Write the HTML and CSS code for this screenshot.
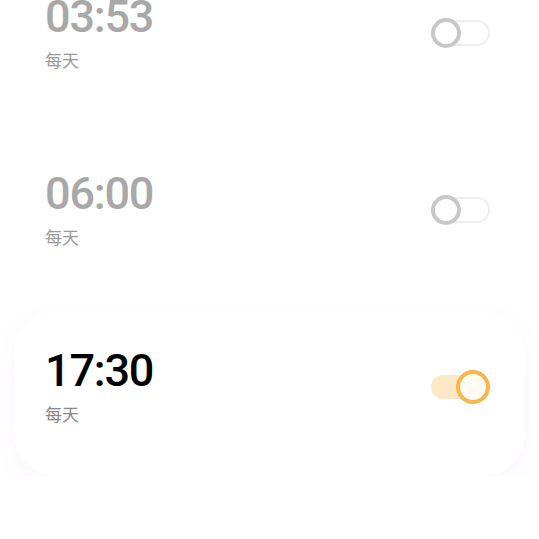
FILE: index.html
```html
<!DOCTYPE html>
<html lang="zh">
<head>
    <meta charset="UTF-8">
    <meta name="viewport" content="width=device-width, initial-scale=1.0">
    <title>闹钟</title>
    <link rel="stylesheet" href="styles.css">
</head>
<body>
    <div class="alarm-list">
        <div class="alarm">
            <div class="alarm-info">
                <div class="alarm-time">03:53</div>
                <div class="alarm-repeat">每天</div>
            </div>
            <div class="switch"><span class="knob"></span></div>
        </div>
        <div class="alarm">
            <div class="alarm-info">
                <div class="alarm-time">06:00</div>
                <div class="alarm-repeat">每天</div>
            </div>
            <div class="switch"><span class="knob"></span></div>
        </div>
        <div class="alarm active">
            <div class="alarm-info">
                <div class="alarm-time">17:30</div>
                <div class="alarm-repeat">每天</div>
            </div>
            <div class="switch on"><span class="knob"></span></div>
        </div>
    </div>
</body>
</html>
```

FILE: styles.css
```css
body {
    margin: 0;
    background-color: #ffffff;
    font-family: Roboto, "Noto Sans CJK SC", sans-serif;
    overflow: hidden;
}
.alarm-list {
    display: flex;
    flex-direction: column;
    gap: 13px;
    margin-top: -42px;
}
.alarm {
    display: flex;
    align-items: center;
    justify-content: space-between;
    height: 164px;
    margin: 0 14px;
    padding: 0 35px 14px 31px;
    border-radius: 42px;
    box-sizing: border-box;
}
.alarm.active {
    box-shadow: 0 8px 26px rgba(214, 170, 230, 0.12);
}
.alarm-time {
    font-size: 45px;
    line-height: 48px;
    font-weight: 500;
    color: #a8a8a8;
    letter-spacing: -1.2px;
}
.active .alarm-time {
    color: #000000;
}
.alarm-repeat {
    margin-top: 8px;
    font-size: 17px;
    line-height: 24px;
    color: #9a9a9a;
}
.active .alarm-repeat {
    color: #888888;
}
.switch {
    position: relative;
    width: 58px;
    height: 26px;
    border: 2px solid #eeeeee;
    border-radius: 13px;
    box-sizing: border-box;
}
.knob {
    position: absolute;
    left: -3px;
    top: -4px;
    width: 30px;
    height: 30px;
    border: 4px solid #c8c8c8;
    border-radius: 50%;
    background-color: #ffffff;
    box-sizing: border-box;
}
.switch.on {
    width: 46px;
    height: 24px;
    margin-right: 13px;
    border: none;
    background-color: #fde8c6;
    border-radius: 12px;
}
.switch.on .knob {
    left: 25px;
    top: -5px;
    width: 34px;
    height: 34px;
    border-color: #f8b64c;
    background-color: #fffaf2;
}
```
